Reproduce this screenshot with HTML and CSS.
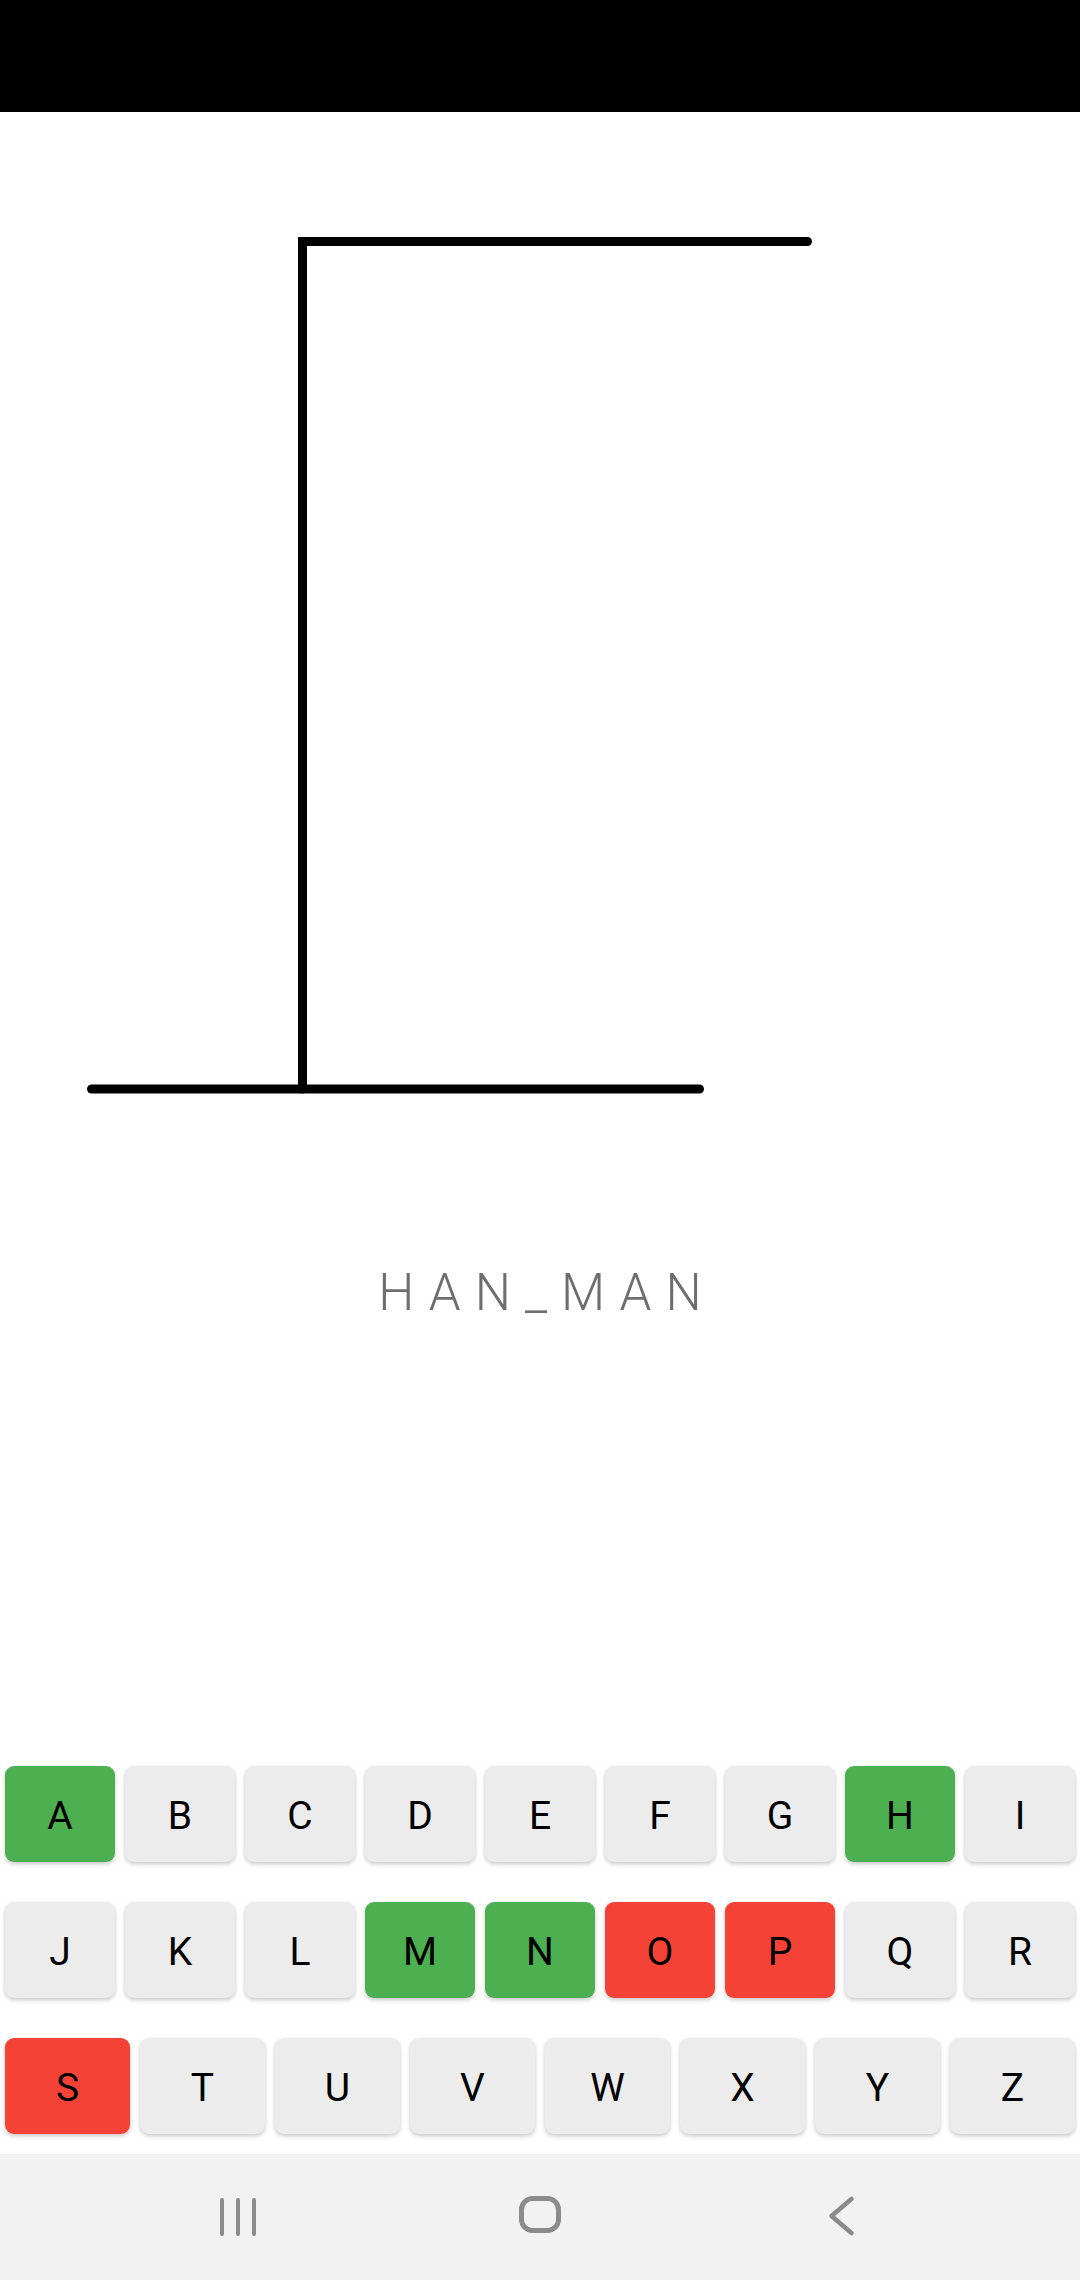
FILE: index.html
```html
<!DOCTYPE html>
<html lang="en">
<head>
    <meta charset="UTF-8">
    <meta name="viewport" content="width=device-width, initial-scale=1.0">
    <title>Hangman</title>
    <link rel="stylesheet" href="styles.css">
</head>
<body>
    <div class="status-bar"></div>

    <!-- gallows drawing -->
    <svg class="gallows" width="1080" height="1000" viewBox="0 0 1080 1000">
        <path d="M302.5 977 V129.5 H807.5" fill="none" stroke="#000" stroke-width="9" stroke-linecap="round" stroke-linejoin="miter"/>
        <line x1="91.5" y1="977" x2="699.5" y2="977" stroke="#000" stroke-width="9" stroke-linecap="round"/>
    </svg>

    <div class="word">HAN_MAN</div>

    <div class="keyboard">
        <div class="key-row">
            <button class="key hit">A</button>
            <button class="key">B</button>
            <button class="key">C</button>
            <button class="key">D</button>
            <button class="key">E</button>
            <button class="key">F</button>
            <button class="key">G</button>
            <button class="key hit">H</button>
            <button class="key">I</button>
        </div>
        <div class="key-row">
            <button class="key">J</button>
            <button class="key">K</button>
            <button class="key">L</button>
            <button class="key hit">M</button>
            <button class="key hit">N</button>
            <button class="key miss">O</button>
            <button class="key miss">P</button>
            <button class="key">Q</button>
            <button class="key">R</button>
        </div>
        <div class="key-row">
            <button class="key miss">S</button>
            <button class="key">T</button>
            <button class="key">U</button>
            <button class="key">V</button>
            <button class="key">W</button>
            <button class="key">X</button>
            <button class="key">Y</button>
            <button class="key">Z</button>
        </div>
    </div>

    <div class="nav-bar">
        <div class="nav-item">
            <svg width="48" height="48" viewBox="0 0 48 48">
                <g stroke="#8b8b8b" stroke-width="4" stroke-linecap="round">
                    <line x1="8" y1="7" x2="8" y2="41"/>
                    <line x1="24" y1="7" x2="24" y2="41"/>
                    <line x1="40" y1="7" x2="40" y2="41"/>
                </g>
            </svg>
        </div>
        <div class="nav-item">
            <svg width="48" height="48" viewBox="0 0 48 48">
                <rect x="5.5" y="5.5" width="37" height="32" rx="11" fill="none" stroke="#8b8b8b" stroke-width="5"/>
            </svg>
        </div>
        <div class="nav-item">
            <svg width="48" height="48" viewBox="0 0 48 48">
                <polyline points="33.5,6 13.5,23 33.5,40" fill="none" stroke="#8b8b8b" stroke-width="4.5" stroke-linecap="round" stroke-linejoin="round"/>
            </svg>
        </div>
    </div>
</body>
</html>
```

FILE: styles.css
```css
html, body {
    margin: 0;
    padding: 0;
}

body {
    width: 1080px;
    height: 2280px;
    display: flex;
    flex-direction: column;
    background-color: #fff;
    font-family: Roboto, "Noto Sans", sans-serif;
    overflow: hidden;
}

.status-bar {
    height: 112px;
    flex-shrink: 0;
    background-color: #000;
}

.gallows {
    display: block;
    flex-shrink: 0;
}

.word {
    margin-top: 151px;
    line-height: 60px;
    font-size: 51px;
    font-weight: 300;
    color: #6e6e6e;
    text-align: center;
    letter-spacing: 14px;
    padding-left: 14px;
}

.keyboard {
    margin-top: auto;
    padding: 0 5px 20px;
    display: flex;
    flex-direction: column;
    gap: 40px;
}

.key-row {
    display: flex;
    gap: 10px;
}

.key {
    flex: 1;
    height: 96px;
    border: none;
    border-radius: 9px;
    background-color: #ececec;
    color: #000;
    font-family: Roboto, sans-serif;
    font-size: 39px;
    font-weight: 400;
    padding: 4px 0 0;
    box-shadow: 0 2px 4px rgba(0, 0, 0, 0.22);
}

.key.hit {
    background-color: #4caf50;
}

.key.miss {
    background-color: #f44336;
}

.nav-bar {
    height: 126px;
    flex-shrink: 0;
    background-color: #f2f2f2;
    display: grid;
    grid-template-columns: repeat(3, 302px);
    justify-content: center;
    align-items: center;
}

.nav-item {
    display: flex;
    justify-content: center;
}

.nav-item svg {
    display: block;
}
```
